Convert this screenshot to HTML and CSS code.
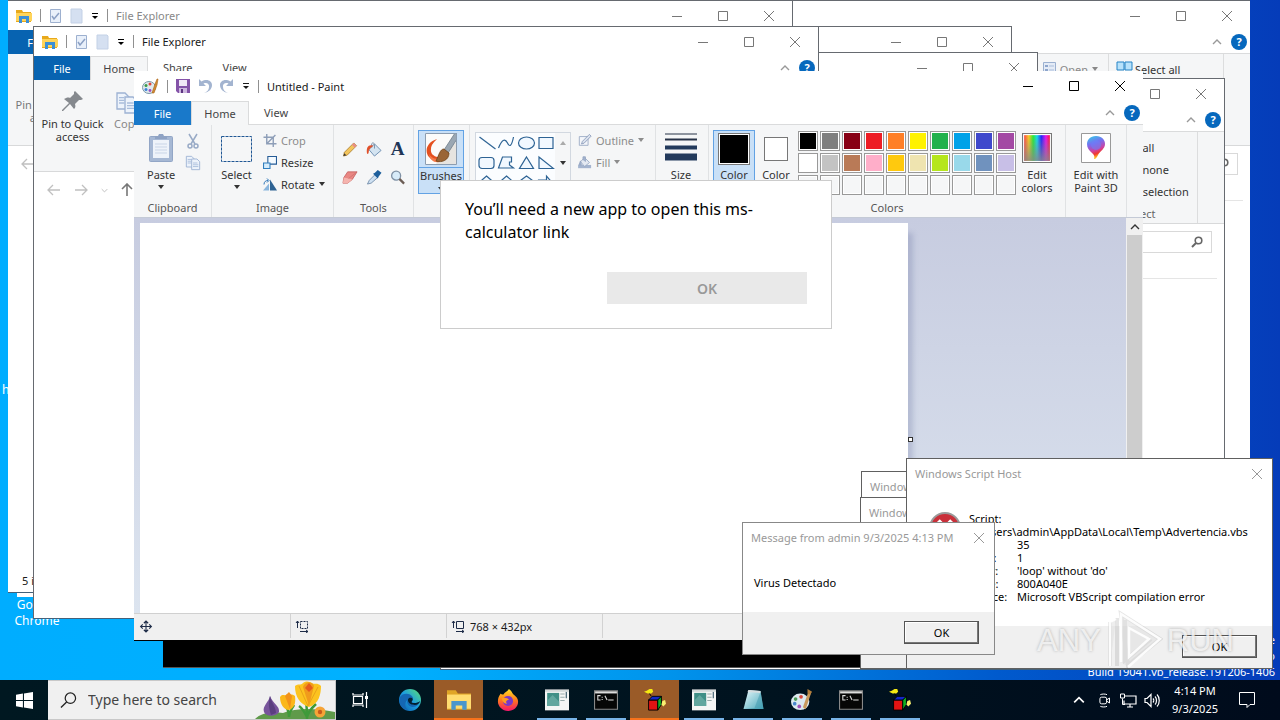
FILE: index.html
```html
<!DOCTYPE html>
<html lang="en">
<head>
<meta charset="utf-8">
<title>Desktop</title>
<link rel="stylesheet" href="styles.css">
</head>
<body>
<svg class="defs" aria-hidden="true">
  <defs>
    <linearGradient id="rainbow"><stop offset="0" stop-color="#f44"/><stop offset=".18" stop-color="#fc2"/><stop offset=".35" stop-color="#2e3"/><stop offset=".5" stop-color="#1de"/><stop offset=".67" stop-color="#22f"/><stop offset=".85" stop-color="#e1e"/><stop offset="1" stop-color="#f13"/></linearGradient>
    <linearGradient id="fade" x2="0" y2="1"><stop offset="0" stop-color="#888" stop-opacity="0"/><stop offset="1" stop-color="#888" stop-opacity=".85"/></linearGradient>
    <linearGradient id="pin3d" x1="0" y1="0" x2=".3" y2="1"><stop offset="0" stop-color="#2ad4e8"/><stop offset=".4" stop-color="#7a6cf0"/><stop offset=".7" stop-color="#d0409c"/><stop offset=".85" stop-color="#f03a30"/><stop offset="1" stop-color="#ffc020"/></linearGradient>
    <linearGradient id="edgeg" x1="0" y1="1" x2="1" y2="0"><stop offset="0" stop-color="#0c59a4"/><stop offset=".5" stop-color="#1b9de2"/><stop offset="1" stop-color="#5fe070"/></linearGradient>
    <linearGradient id="foxg" x2="0" y2="1"><stop offset="0" stop-color="#ffe226"/><stop offset=".5" stop-color="#ff7a1c"/><stop offset="1" stop-color="#f5156c"/></linearGradient>
    <linearGradient id="paper" x2="1" y2="1"><stop offset="0" stop-color="#e8f8fb"/><stop offset="1" stop-color="#4aa8bb"/></linearGradient>
  </defs>
  <symbol id="i-min" viewBox="0 0 12 12"><path d="M1 6.500h10" stroke="currentColor"/></symbol>
  <symbol id="i-max" viewBox="0 0 12 12"><path d="M1.500 1.500h9v9h-9z" fill="none" stroke="currentColor"/></symbol>
  <symbol id="i-close" viewBox="0 0 12 12"><path d="M1 1l10 10M11 1L1 11" stroke="currentColor"/></symbol>
  <symbol id="i-up" viewBox="0 0 10 6"><path d="M1 5l4-4 4 4" fill="none" stroke="currentColor" stroke-width="1.400"/></symbol>
  <symbol id="i-tri" viewBox="0 0 6 4"><path d="M0 0h6L3 4z" fill="currentColor"/></symbol>
  <symbol id="i-qat" viewBox="0 0 8 8"><path d="M1 1.500h6" stroke="currentColor"/><path d="M1 4h6L4 7z" fill="currentColor"/></symbol>
  <symbol id="i-folder" viewBox="0 0 16 16"><path d="M0 2h6l1 2h8v10H0z" fill="#e8a91c"/><path d="M0 5h16v8H0z" fill="#ffd45a"/><path d="M3 8h10v7h-3v-4H6v4H3z" fill="#3c8fd6"/></symbol>
  <symbol id="i-check" viewBox="0 0 13 16"><path d="M1.500 1.500h10v13h-10z" fill="#e9f0fa" stroke="#9db0cf"/><path d="M3 8l2 3 5-6" fill="none" stroke="#8ba0c4" stroke-width="1.500"/></symbol>
  <symbol id="i-new" viewBox="0 0 13 16"><path d="M1 1h10l1 1v13H1z" fill="#d5e0f1" stroke="#c3d1e6"/></symbol>
  <symbol id="i-pin" viewBox="0 0 24 24"><path d="M14 2l8 8-2 1-2 0-4 4c1 3 0 4-1 5l-4-5-7 7-1 0 0-1 7-7-5-4c2-1 4-2 6-1l4-4 0-2z" fill="#85898e"/></symbol>
  <symbol id="i-copy" viewBox="0 0 18 18"><g fill="#edf3fb" stroke="#9db2d3"><path d="M1.500 1.500h6l3 3v9h-9z"/><path d="M7.500 4.500h6l3 3v9h-9z"/></g><path d="M3 5h4M3 7h4M3 9h4M9 9h5M9 11h6M9 13h6" stroke="#a9bddb"/></symbol>
  <symbol id="i-back" viewBox="0 0 14 12"><path d="M13 6H1M6 1L1 6l5 5" fill="none" stroke="currentColor" stroke-width="1.300"/></symbol>
  <symbol id="i-fwd" viewBox="0 0 14 12"><path d="M1 6h12M8 1l5 5-5 5" fill="none" stroke="currentColor" stroke-width="1.300"/></symbol>
  <symbol id="i-upar" viewBox="0 0 12 14"><path d="M6 13V1M1 6l5-5 5 5" fill="none" stroke="currentColor" stroke-width="1.600"/></symbol>
  <symbol id="i-mag" viewBox="0 0 12 12"><circle cx="7.500" cy="4.500" r="3.300" fill="none" stroke="currentColor" stroke-width="1.600"/><path d="M5 7L1 11" stroke="currentColor" stroke-width="2"/></symbol>
  <symbol id="i-sel" viewBox="0 0 17 14"><path d="M1 1h7v8H1zM9 1h7v8H9z" fill="#b8e2fb" stroke="#2583c6"/></symbol>
  <symbol id="i-open" viewBox="0 0 13 14"><path d="M.5.500h12v13H.5z" fill="#e4ebf6" stroke="#9bb0d0"/><path d="M2 3h3v2H2zM2 7h3v2H2z" fill="#8ea6cc"/><path d="M6 4h5M6 8h5" stroke="#a9bddb"/></symbol>
  <symbol id="i-palette" viewBox="0 0 17 17"><ellipse cx="7" cy="9.500" rx="6.500" ry="6" fill="#dfe9ee" stroke="#7c98a8"/><circle cx="4" cy="7.500" r="1.500" fill="#3b9b4a"/><circle cx="8" cy="6" r="1.500" fill="#e1463a"/><circle cx="4" cy="11.500" r="1.500" fill="#3b86d8"/><circle cx="8" cy="12.500" r="1.400" fill="#9a4ec0"/><path d="M15 1l-2 5-3 9 2 0 3-8 1-6z" fill="#d08a32" stroke="#ad6718" stroke-width=".6"/></symbol>
  <symbol id="i-save" viewBox="0 0 14 14"><path d="M0 0h14v14H2l-2-2z" fill="#8453a8"/><path d="M3 1h8v6H3z" fill="#f0e7f6"/><path d="M3 9h8v5H3z" fill="#cdb6df"/><path d="M5 10h2v4H5z" fill="#5c3580"/></symbol>
  <symbol id="i-undo" viewBox="0 0 14 14"><path d="M1 0v7h7L5.500 4.500C9 3 11.500 5 11 8c0 3-2 5-5 6 5-1 8-4 8-8S9-1 3.500 2.500z" fill="#a3b4d0"/></symbol>
  <symbol id="i-cut" viewBox="0 0 12 16"><path d="M2 1l6 10M10 1L4 11" stroke="#98aac6" stroke-width="1.500"/><circle cx="3" cy="13" r="2" fill="none" stroke="#98aac6" stroke-width="1.500"/><circle cx="9" cy="13" r="2" fill="none" stroke="#98aac6" stroke-width="1.500"/></symbol>
  <symbol id="i-paste" viewBox="0 0 26 30"><rect x="1.500" y="3.500" width="23" height="25" rx="1" fill="#a6b8d4" stroke="#92a6c6"/><path d="M5 7h16v18H5z" fill="#eef3fa"/><path d="M7 11h12M7 14h12M7 17h12M7 20h12" stroke="#c9d5e7"/><path d="M7 3h3l1-2h4l1 2h3v3H7z" fill="#8fa3c4"/></symbol>
  <symbol id="i-select" viewBox="0 0 31 26"><path d="M.5.500h30v25H.5z" fill="none" stroke="#1f5794" stroke-dasharray="3 1"/></symbol>
  <symbol id="i-crop" viewBox="0 0 12 12"><path d="M3 0v9h9M0 3h9v9M3 9l8-8" fill="none" stroke="#8e9eb8" stroke-width="1.300"/></symbol>
  <symbol id="i-resize" viewBox="0 0 13 12"><path d="M4.500.500h8v7h-8z" fill="#f4faff" stroke="#255b96"/><path d="M.5 6.500h6v5h-6z" fill="#d5ecfb" stroke="#2f7dbd"/></symbol>
  <symbol id="i-rotate" viewBox="0 0 14 12"><path d="M6 12H0l6-7z" fill="#8ab6de"/><path d="M7 12V1l7 11z" fill="#2e6293"/><path d="M1 6c0-3 2-4 4-4M4 0l2 2-2 2" fill="none" stroke="#2b74b7"/></symbol>
  <symbol id="i-pencil" viewBox="0 0 16 16"><path d="M1 15l1-4L12 1l3 3L5 14z" fill="#f3c55c" stroke="#a3772c" stroke-width=".8"/><path d="M12 1l3 3-2 2-3-3z" fill="#e88d86"/><path d="M1 15l1-3 2 2z" fill="#333"/></symbol>
  <symbol id="i-bucket" viewBox="0 0 17 16"><path d="M9 2l7 7-7 6-6-7z" fill="#d4e4f1" stroke="#6c8db0"/><path d="M6 6V2c1-2 3-1 3 1v4" fill="none" stroke="#7890a8"/><path d="M8 4C3 2 0 5 1 12c1 2 2 0 2-3l2-3z" fill="#e0502a"/></symbol>
  <symbol id="i-eraser" viewBox="0 0 17 14"><path d="M6 1h10l-5 8-5 4H1l1-6z" fill="#e98783" stroke="#c25b5b" stroke-width=".8"/><path d="M2 7l5 1 4 1-5 4H1z" fill="#f5b4ae"/><path d="M7 8l9-7" stroke="#c76f6d" stroke-width=".7"/></symbol>
  <symbol id="i-pick" viewBox="0 0 16 16"><path d="M1 15l2-4 6-6 3 3-7 6z" fill="#cfe1f2" stroke="#5f7c9c" stroke-width=".8"/><path d="M7 4l2-1 3-3 4 3-3 4-1 2z" fill="#1e5f9c"/></symbol>
  <symbol id="i-zoom" viewBox="0 0 16 16"><circle cx="6" cy="6" r="4.800" fill="#d7ebf9" stroke="#7f91a5" stroke-width="1.400"/><path d="M9.500 9.500l5 5" stroke="#6b5d55" stroke-width="2.400"/></symbol>
  <symbol id="i-brush" viewBox="0 0 32 32"><path d="M0 0h32v32H0z" fill="#fbfbfa"/><path d="M32 8v24H10z" fill="#e6e4e0"/><path d="M12 6C2 9-1 18 4 24s11 4 13 0c-6 1-12-2-11-8 0-4 3-7 6-10z" fill="#e4501f"/><path d="M4 21c3 5 8 6 13 3l-3 5c-5 1-9-2-10-8z" fill="#f47a4a"/><path d="M30 0L19 17l4 3 9-14V0z" fill="#9aa7b3" stroke="#6f7d8a" stroke-width=".8"/><path d="M19 16c-4 0-5 6-8 12 6 2 13-1 13-8z" fill="#9a6536" stroke="#6f4218" stroke-width=".8"/><path d="M.5.500h31v31H.5z" fill="none" stroke="#8c9db0"/></symbol>
  <symbol id="i-outline" viewBox="0 0 16 14"><path d="M1.500 2.500h10v10h-10z" fill="#f4f6fa" stroke="#9aaac5"/><path d="M4 11l1-3 8-8 2 2-8 8z" fill="#dbe2ee" stroke="#8b9cba"/></symbol>
  <symbol id="i-fill" viewBox="0 0 17 16"><path d="M0 11h16v4H0z" fill="#a4b4cf"/><path d="M8 2l6 6-6 5-5-6z" fill="#e4e9f2" stroke="#93a4c1"/><path d="M6 5V1h3v6M3 6L1 11h3z" fill="#a4b4cf" stroke="#93a4c1"/></symbol>
  <symbol id="i-shapes" viewBox="0 0 78 60"><g fill="#f1f8ff" stroke="#2d6394" stroke-width="1.200"><path d="M3 4l16 12"/><path d="M22 15c4-10 7-9 9-5s4 4 6-6" fill="none"/><ellipse cx="50" cy="10" rx="8" ry="6"/><path d="M62.500 4.500h14v11h-14z"/><rect x="2.500" y="24.500" width="15" height="11" rx="3"/><path d="M22 35l4-11h9v5l-2 0 0 3 4 3z"/><path d="M50 24l7 11.500H43z"/><path d="M62.500 24v11.500H77z"/><path d="M10 43l8 7-8 7-8-7z"/><path d="M30 43l8 7-8 7-8-7z"/><path d="M50 43l8 6-3 8H45l-3-8z"/><path d="M62 47h8v-4l6 7-6 7v-4h-8z"/></g></symbol>
  <symbol id="i-size" viewBox="0 0 32 28"><path d="M0 1h32" stroke="#273247"/><path d="M0 6.500h32" stroke="#273247" stroke-width="2"/><path d="M0 14.500h32" stroke="#233a5c" stroke-width="4"/><path d="M0 24h32" stroke="#233a5c" stroke-width="7"/></symbol>
  <symbol id="i-edit" viewBox="0 0 28 28"><path d="M.5.500h27v27H.5z" fill="#fff" stroke="#777"/><path d="M2 2h24v24H2z" fill="url(#rainbow)"/><path d="M2 2h24v24H2z" fill="url(#fade)"/></symbol>
  <symbol id="i-p3d" viewBox="0 0 30 30"><path d="M.5.500h29v29H.5z" fill="#fff" stroke="#999"/><path d="M15 3c6 0 9 4 9 8 0 5-5 7-7 11-1 2-2 4-4 4 1-3 0-4-2-6-3-3-5-5-5-9 0-4 3-8 9-8z" fill="url(#pin3d)"/><circle cx="15" cy="12" r="5" fill="#6b80f7" opacity=".6"/></symbol>
  <symbol id="i-move" viewBox="0 0 12 12"><path d="M6 1v10M1 6h10M4 3l2-2 2 2M4 9l2 2 2-2M3 4L1 6l2 2M9 4l2 2-2 2" fill="none" stroke="#1d2b47"/></symbol>
  <symbol id="i-dim" viewBox="0 0 14 13"><path d="M2.500 1v7M1 3l1.500-2L4 3M5 11.500h8M11 10l2 1.500-2 1.500" fill="none" stroke="#1d2b47"/><path d="M5.500 1.500h7v7h-7z" fill="none" stroke="#1d2b47"/></symbol>
  <symbol id="i-dimsel" viewBox="0 0 14 13"><path d="M2.500 1v7M1 3l1.500-2L4 3M5 11.500h8M11 10l2 1.500-2 1.500" fill="none" stroke="#1d2b47"/><path d="M5.500 1.500h7v7h-7z" fill="none" stroke="#1d2b47" stroke-dasharray="2 1"/></symbol>
  <symbol id="i-error" viewBox="0 0 32 32"><circle cx="16" cy="16" r="15" fill="#c9303a" stroke="#9a9a9a" stroke-width="2"/><path d="M9 9l14 14M23 9L9 23" stroke="#fff" stroke-width="5"/></symbol>
  <symbol id="i-win" viewBox="0 0 16 16"><path d="M0 2.500l6.500-1v6H0zM7.500 1.300L16 0v7.500H7.500zM0 8.500h6.500v6L0 13.500zM7.500 8.500H16V16l-8.500-1.300z" fill="#fff"/></symbol>
  <symbol id="i-search" viewBox="0 0 18 18"><circle cx="11" cy="6.500" r="5.500" fill="none" stroke="#222" stroke-width="1.300"/><path d="M7 10.500l-6 6" stroke="#222" stroke-width="1.400"/></symbol>
  <symbol id="i-flowers" viewBox="0 0 80 38"><path d="M0 38c6-6 16-8 28-6 16-6 34-4 52-1v7z" fill="#5f9a4a"/><path d="M34 36c0-6-2-10-5-14M34 36c0-6 3-8 5-12M52 38c0-8 0-12-1-16M52 36c2-7 6-10 9-13M52 36c-3-6-5-9-8-11" stroke="#3f9a3a" stroke-width="2.500" fill="none"/><path d="M15 15c-1 6-8 10-6 16 2 5 12 5 15 0 1-6-6-8-9-16z" fill="#77549b"/><path d="M15 15c-2 8-1 12 1 19l5-2c0-6-4-9-6-17z" fill="#5b3f80"/><path d="M25 16c3-4 5 0 7-3 2 2 4-1 8 2 1 8-1 12-6 14-5 0-9-6-9-13z" fill="#fbb71a"/><path d="M30 15l4-4 3 4-2 13z" fill="#f29219"/><path d="M40 5c3-3 6 0 8-3 4-3 7-1 9 0 3 2 5-1 9 3 0 8-2 18-12 21-9-3-14-10-14-21z" fill="#fcc31f"/><path d="M48 6c2-6 9-6 11-1l-5 20z" fill="#f09b1c"/><path d="M50 7l4-5 4 5-4 4z" fill="#e65b1c"/><path d="M44 5l9 20 10-19" fill="none" stroke="#e9a31a"/><circle cx="65" cy="31" r="5.500" fill="#f6a437"/><circle cx="65" cy="31" r="2.200" fill="#c95b1a"/></symbol>
  <symbol id="i-task" viewBox="0 0 17 16"><path d="M1.500 4.500h9v7h-9zM1 1v2h10V1M1 15v-2h10v2M14.500 0v4M14.500 7v9" fill="none" stroke="#fff" stroke-width="1.200"/><path d="M13 4h3v3h-3z" fill="#fff"/></symbol>
  <symbol id="i-edge" viewBox="0 0 24 24"><circle cx="12" cy="12" r="12" fill="url(#edgeg)"/><path d="M1 9c3-5 11-5 14 0 1 3-1 4-2 5 3 2 7 2 10-1-1 3-3 5-5 6-6 2-10-2-9-7-3 3-3 8 1 11C3 22-1 16 1 9z" fill="#1567b4"/><path d="M10 11c1-2 4-2 5 0 0 2-2 3-1 4 3 1 7 0 9-2-1 4-5 5-8 4-3 0-6-3-5-6z" fill="#03202f"/></symbol>
  <symbol id="i-tfolder" viewBox="0 0 22 20"><path d="M0 1h8l2 3h12v15H0z" fill="#e0a526"/><path d="M0 5h22v13H0z" fill="#ffdc70"/><path d="M4 11h14v8h-4v-4H8v4H4z" fill="#4a96cc"/></symbol>
  <symbol id="i-fox" viewBox="0 0 24 24"><path d="M4 5c0 1 2 1 3 1 2-3 4-3 6-6 4 3 3 4 5 6 4 3 5 5 5 8 0 6-5 10-11 10S1 19 1 14c0-4 1-6 3-9z" fill="url(#foxg)"/><circle cx="12" cy="13" r="5.500" fill="#7b37c8"/><path d="M5 10c4-1 7 0 8 2-3 0-4 2-2 4-3 0-5-2-6-6z" fill="#ff9c22"/></symbol>
  <symbol id="i-doc" viewBox="0 0 22 19"><path d="M0 0h22v19H0z" fill="#f5f6f5"/><path d="M2 3h11v12H2z" fill="#3f8f86"/><path d="M2 10l5-5 6 6v4H2z" fill="#62a79f"/><path d="M14 4h4M14 7h4M14 10h4" stroke="#9aa"/><path d="M19.500 2v6" stroke="#356"/><path d="M0 0h22v2H0z" fill="#d5d9d9"/></symbol>
  <symbol id="i-cmd" viewBox="0 0 22 18"><path d="M.5.500h21v17H.5z" fill="#060606" stroke="#888"/><path d="M1 1h20v2H1z" fill="#ddd"/><path d="M6 5H3.500v4H6M7.500 6v1M7.500 8v1M10 5l2 4M13 9h5" fill="none" stroke="#ddd"/></symbol>
  <symbol id="i-cube" viewBox="0 0 24 24"><path d="M0 3l3-1 3-2h3l1 3-2 2H4z" fill="#f6ea12"/><path d="M6 5l2 3" stroke="#000"/><path d="M5 12h10v11H5z" fill="#e21313" stroke="#000"/><path d="M5 12l4-4h10l-4 4z" fill="#1228c8" stroke="#000"/><path d="M15 12l4-4v9l-4 6z" fill="#10b022" stroke="#000"/><path d="M20 13l3-1 1 4-3 3-2-2z" fill="#f8f070"/></symbol>
  <symbol id="i-note" viewBox="0 0 23 22"><path d="M7 1l12 1 3 18H2z" fill="url(#paper)"/><path d="M7 1l12 1 0 2-13-1z" fill="#d6dde0"/><path d="M2 20l11-1 6-16 3 17z" fill="#3d98ad" opacity=".5"/></symbol>
  <symbol id="i-tpaint" viewBox="0 0 24 24"><ellipse cx="10" cy="14" rx="10" ry="9" fill="#dce9ef"/><circle cx="5" cy="11" r="2" fill="#4b9a55"/><circle cx="11" cy="8.500" r="2" fill="#d9483b"/><circle cx="4" cy="16" r="2" fill="#4a86cc"/><circle cx="9" cy="19" r="2" fill="#a14fb8"/><path d="M19 3l-6 17 3 2 6-18z" fill="#c99a5c"/><path d="M18 0l5 3-2 3-3-1z" fill="#b5803e"/></symbol>
  <symbol id="i-cam" viewBox="0 0 14 18"><rect x="1.500" y="5" width="8" height="8" rx="2" fill="none" stroke="#fff" stroke-width="1.200"/><path d="M10 8l3-2v6l-3-2M2 2c2-1 6-1 8 0M2 16c2 1 6 1 8 0" fill="none" stroke="#fff" stroke-width="1.200"/></symbol>
  <symbol id="i-net" viewBox="0 0 17 14"><path d="M5 2.500h11v8H4V7M7 13.500h6M10 11v2" fill="none" stroke="#fff" stroke-width="1.200"/><path d="M.5.500h4v4h-4zM2.500 5v6H5" fill="none" stroke="#fff"/></symbol>
  <symbol id="i-vol" viewBox="0 0 17 14"><path d="M1 5h2l4-4v12L3 9H1zM9 5c1 1 1 3 0 4M11 3c2 2 2 6 0 8M13 1c3 3 3 9 0 12" fill="none" stroke="#fff" stroke-width="1.200"/></symbol>
  <symbol id="i-action" viewBox="0 0 16 16"><path d="M.5.500h15v12H11l-3 3v-3H.5z" fill="none" stroke="#fff"/></symbol>
</svg>

<div class="desktop">
  <main class="workspace">
    <p class="shortcut-cut">h</p>
    <div class="shortcut"><span class="chrome-ball"></span>Google<br>Chrome</div>
    <p class="build">Test Mode<br>Windows 10 Pro<br>Build 19041.vb_release.191206-1406</p>

    <section class="window explorer inactive win-a">
      <header class="titlebar"><div class="controls"><button aria-label="Minimize"><svg><use href="#i-min"/></svg></button><button aria-label="Maximize"><svg><use href="#i-max"/></svg></button><button aria-label="Close"><svg><use href="#i-close"/></svg></button></div></header>
      <div class="tabs"><span class="tabs-end"><svg class="chev"><use href="#i-up"/></svg><button class="help" aria-label="Help">?</button></span></div>
      <div class="ex-ribbon end">
        <div class="ex-open"><svg><use href="#i-open"/></svg>Open<svg class="tri"><use href="#i-tri"/></svg></div>
        <div class="ex-select"><span><svg><use href="#i-sel"/></svg>Select all</span></div>
      </div>
      <div class="ex-nav"><div class="ex-search"><svg><use href="#i-mag"/></svg></div></div>
      <hr>
    </section>

    <section class="window explorer inactive win-b">
      <header class="titlebar"><div class="controls"><button aria-label="Minimize"><svg><use href="#i-min"/></svg></button><button aria-label="Maximize"><svg><use href="#i-max"/></svg></button><button aria-label="Close"><svg><use href="#i-close"/></svg></button></div></header>
      <div class="tabs"><span class="tabs-end"><svg class="chev"><use href="#i-up"/></svg><button class="help" aria-label="Help">?</button></span></div>
      <div class="ex-ribbon end">
        <div class="ex-select"><span>Select all</span><span>Select none</span><span>Invert selection</span><b>Select</b></div>
      </div>
      <div class="ex-nav"><div class="ex-search"><svg><use href="#i-mag"/></svg></div></div>
      <hr>
    </section>

    <section class="window explorer inactive win-c"><header class="titlebar"><div class="controls"><button aria-label="Minimize"><svg><use href="#i-min"/></svg></button><button aria-label="Maximize"><svg><use href="#i-max"/></svg></button><button aria-label="Close"><svg><use href="#i-close"/></svg></button></div></header></section>
    <section class="window explorer inactive win-d"><header class="titlebar"><div class="controls"><button aria-label="Minimize"><svg><use href="#i-min"/></svg></button><button aria-label="Maximize"><svg><use href="#i-max"/></svg></button><button aria-label="Close"><svg><use href="#i-close"/></svg></button></div></header></section>

    <section class="window explorer inactive win-e">
      <header class="titlebar">
        <div class="quick"><svg class="s16"><use href="#i-folder"/></svg><i></i><svg class="doc"><use href="#i-check"/></svg><svg class="doc"><use href="#i-new"/></svg><svg class="s8"><use href="#i-qat"/></svg><i></i></div>
        <h2>File Explorer</h2>
        <div class="controls"><button aria-label="Minimize"><svg><use href="#i-min"/></svg></button><button aria-label="Maximize"><svg><use href="#i-max"/></svg></button><button aria-label="Close"><svg><use href="#i-close"/></svg></button></div>
      </header>
      <div class="tabs"><button class="file">File</button></div>
      <div class="ex-ribbon"><div class="ex-tool"><svg><use href="#i-pin"/></svg>Pin to Quick access</div></div>
      <div class="ex-nav"><svg class="nav-w"><use href="#i-back"/></svg></div>
      <footer class="ex-status">5 items</footer>
    </section>

    <section class="window explorer win-f">
      <header class="titlebar">
        <div class="quick"><svg class="s16"><use href="#i-folder"/></svg><i></i><svg class="doc"><use href="#i-check"/></svg><svg class="doc"><use href="#i-new"/></svg><svg class="s8"><use href="#i-qat"/></svg><i></i></div>
        <h2>File Explorer</h2>
        <div class="controls"><button aria-label="Minimize"><svg><use href="#i-min"/></svg></button><button aria-label="Maximize"><svg><use href="#i-max"/></svg></button><button aria-label="Close"><svg><use href="#i-close"/></svg></button></div>
      </header>
      <div class="tabs"><button class="file">File</button><button class="on">Home</button><button>Share</button><button>View</button><span class="tabs-end"><svg class="chev"><use href="#i-up"/></svg><button class="help" aria-label="Help">?</button></span></div>
      <div class="ex-ribbon"><div class="ex-tool"><svg><use href="#i-pin"/></svg>Pin to Quick access</div><div class="ex-tool dim"><svg class="big"><use href="#i-copy"/></svg>Copy</div></div>
      <div class="ex-nav"><svg class="nav-w"><use href="#i-back"/></svg><svg class="nav-w"><use href="#i-fwd"/></svg><svg class="nav-d"><use href="#i-up"/></svg><svg class="nav-u"><use href="#i-upar"/></svg></div>
    </section>

    <section class="window console"></section>

    <section class="window paint">
      <header class="titlebar">
        <div class="quick"><svg class="s17"><use href="#i-palette"/></svg><i></i><svg class="s14"><use href="#i-save"/></svg><svg class="s14"><use href="#i-undo"/></svg><svg class="s14 flip"><use href="#i-undo"/></svg><svg class="s8"><use href="#i-qat"/></svg><i></i></div>
        <h1>Untitled - Paint</h1>
        <div class="controls"><button aria-label="Minimize"><svg><use href="#i-min"/></svg></button><button aria-label="Maximize"><svg><use href="#i-max"/></svg></button><button aria-label="Close"><svg><use href="#i-close"/></svg></button></div>
      </header>
      <div class="tabs"><button class="file">File</button><button class="on">Home</button><button>View</button><span class="tabs-end"><svg class="chev"><use href="#i-up"/></svg><button class="help" aria-label="Help">?</button></span></div>
      <div class="ribbon">
        <div class="group g-clip">
          <div class="tools"><button class="big"><svg class="paste"><use href="#i-paste"/></svg>Paste<svg class="tri"><use href="#i-tri"/></svg></button>
          <div class="stack"><button aria-label="Cut"><svg class="cut"><use href="#i-cut"/></svg></button><button aria-label="Copy"><svg class="s16"><use href="#i-copy"/></svg></button></div></div>
          <span class="label">Clipboard</span>
        </div>
        <div class="group g-image">
          <div class="tools"><button class="big"><svg class="select"><use href="#i-select"/></svg>Select<svg class="tri"><use href="#i-tri"/></svg></button>
          <div class="stack text"><button class="dim"><svg><use href="#i-crop"/></svg>Crop</button><button><svg><use href="#i-resize"/></svg>Resize</button><button><svg><use href="#i-rotate"/></svg>Rotate<svg class="tri"><use href="#i-tri"/></svg></button></div></div>
          <span class="label">Image</span>
        </div>
        <div class="group g-tools">
          <div class="toolgrid"><button aria-label="Pencil"><svg><use href="#i-pencil"/></svg></button><button aria-label="Fill with color"><svg><use href="#i-bucket"/></svg></button><button class="glyph">A</button><button aria-label="Eraser"><svg><use href="#i-eraser"/></svg></button><button aria-label="Color picker"><svg><use href="#i-pick"/></svg></button><button aria-label="Magnifier"><svg><use href="#i-zoom"/></svg></button></div>
          <span class="label">Tools</span>
        </div>
        <div class="group g-brush"><button class="brushes"><span><svg><use href="#i-brush"/></svg></span>Brushes<svg class="tri"><use href="#i-tri"/></svg></button></div>
        <div class="group g-shapes">
          <div class="tools">
            <div class="gallery"><svg><use href="#i-shapes"/></svg><div class="scroller"><svg class="tri up"><use href="#i-tri"/></svg><svg class="tri"><use href="#i-tri"/></svg><svg class="s8"><use href="#i-qat"/></svg></div></div>
            <div class="stack text"><button class="dim"><svg><use href="#i-outline"/></svg>Outline<svg class="tri"><use href="#i-tri"/></svg></button><button class="dim"><svg><use href="#i-fill"/></svg>Fill<svg class="tri"><use href="#i-tri"/></svg></button></div>
          </div>
        </div>
        <div class="group g-size"><button class="big"><svg class="size"><use href="#i-size"/></svg>Size</button></div>
        <div class="group g-colors">
          <div class="tools">
            <button class="color one"><span></span>Color</button><button class="color two"><span></span>Color</button>
            <div class="palette">
              <button aria-label="Black" class="c1"></button><button aria-label="Gray" class="c2"></button><button aria-label="Dark red" class="c3"></button><button aria-label="Red" class="c4"></button><button aria-label="Orange" class="c5"></button><button aria-label="Yellow" class="c6"></button><button aria-label="Green" class="c7"></button><button aria-label="Turquoise" class="c8"></button><button aria-label="Indigo" class="c9"></button><button aria-label="Purple" class="c10"></button>
              <button aria-label="White" class="c11"></button><button aria-label="Light gray" class="c12"></button><button aria-label="Brown" class="c13"></button><button aria-label="Rose" class="c14"></button><button aria-label="Gold" class="c15"></button><button aria-label="Light yellow" class="c16"></button><button aria-label="Lime" class="c17"></button><button aria-label="Light turquoise" class="c18"></button><button aria-label="Blue gray" class="c19"></button><button aria-label="Lavender" class="c20"></button>
              <button aria-label="Custom 1"></button><button aria-label="Custom 2"></button><button aria-label="Custom 3"></button><button aria-label="Custom 4"></button><button aria-label="Custom 5"></button><button aria-label="Custom 6"></button><button aria-label="Custom 7"></button><button aria-label="Custom 8"></button><button aria-label="Custom 9"></button><button aria-label="Custom 10"></button>
            </div>
            <button class="big edit"><svg><use href="#i-edit"/></svg>Edit<br>colors</button>
          </div>
          <span class="label">Colors</span>
        </div>
        <div class="group g-3d"><button class="big"><svg><use href="#i-p3d"/></svg>Edit with<br>Paint 3D</button></div>
      </div>
      <div class="canvas-area">
        <div class="canvas-wrap"><div class="canvas"></div><span class="handle"></span></div>
        <div class="scrollbar"><svg><use href="#i-up"/></svg><span></span></div>
      </div>
      <footer class="status"><span><svg><use href="#i-move"/></svg></span><span><svg><use href="#i-dimsel"/></svg></span><span><svg><use href="#i-dim"/></svg>768 × 432px</span><span></span></footer>
    </section>

    <section class="window dialog host-a"><header><h2>Windows Script Host</h2></header></section>
    <section class="window dialog host-b"><header><h2>Windows Script Host</h2></header></section>
    <section class="window dialog host">
      <header><h2>Windows Script Host</h2><button aria-label="Close"><svg><use href="#i-close"/></svg></button></header>
      <div class="body"><svg class="error"><use href="#i-error"/></svg>
        <dl><dt class="wide">Script:</dt><dd class="wide">C:\Users\admin\AppData\Local\Temp\Advertencia.vbs</dd><dt>Line:</dt><dd>35</dd><dt>Char:</dt><dd>1</dd><dt>Error:</dt><dd>'loop' without 'do'</dd><dt>Code:</dt><dd>800A040E</dd><dt>Source:</dt><dd>Microsoft VBScript compilation error</dd></dl>
      </div>
      <footer><button>OK</button></footer>
    </section>
    <section class="window dialog message">
      <header><h2>Message from admin 9/3/2025 4:13 PM</h2><button aria-label="Close"><svg><use href="#i-close"/></svg></button></header>
      <div class="body">Virus Detectado</div>
      <footer><button>OK</button></footer>
    </section>
    <section class="window applink"><p>You’ll need a new app to open this ms-calculator link</p><button disabled>OK</button></section>
    <div class="watermark"><span>ANY</span><svg viewBox="0 0 58 62"><path d="M5 56V12M12 56V8M16 4l39 25-32 26zM20 10v40l26-21" fill="none" stroke="#999" stroke-opacity=".25" stroke-width="4"/><path d="M5 56V12l6-3M16 52V4l39 25-32 28M24 47V18l20 11z" fill="#ddd" fill-opacity=".5" stroke="#fff" stroke-opacity=".9" stroke-width="2.500"/></svg><span>RUN</span></div>
  </main>

  <nav class="taskbar">
    <button class="start" aria-label="Start"><svg><use href="#i-win"/></svg></button>
    <label class="find"><svg class="s17"><use href="#i-search"/></svg><input type="text" placeholder="Type here to search" aria-label="Search"><svg class="flowers"><use href="#i-flowers"/></svg></label>
    <button class="app" aria-label="Task View"><svg class="s17"><use href="#i-task"/></svg></button>
    <button class="app" aria-label="Edge"><svg><use href="#i-edge"/></svg></button>
    <button class="app alert" aria-label="File Explorer"><svg><use href="#i-tfolder"/></svg></button>
    <button class="app" aria-label="Firefox"><svg><use href="#i-fox"/></svg></button>
    <button class="app run" aria-label="Script"><svg><use href="#i-doc"/></svg></button>
    <button class="app run" aria-label="Command Prompt"><svg><use href="#i-cmd"/></svg></button>
    <button class="app alert" aria-label="Program"><svg><use href="#i-cube"/></svg></button>
    <button class="app run" aria-label="Script"><svg><use href="#i-doc"/></svg></button>
    <button class="app run" aria-label="Notepad"><svg><use href="#i-note"/></svg></button>
    <button class="app run" aria-label="Paint"><svg><use href="#i-tpaint"/></svg></button>
    <button class="app run" aria-label="Command Prompt"><svg><use href="#i-cmd"/></svg></button>
    <button class="app run" aria-label="Program"><svg><use href="#i-cube"/></svg></button>
    <div class="tray"><svg class="t-up"><use href="#i-up"/></svg><svg><use href="#i-cam"/></svg><svg><use href="#i-net"/></svg><svg><use href="#i-vol"/></svg><time>4:14 PM<br>9/3/2025</time><svg class="act"><use href="#i-action"/></svg></div>
  </nav>
</div>
</body>
</html>
```
FILE: styles.css
```css
* { box-sizing: border-box; margin: 0; padding: 0; }
html, body { height: 100%; }
body { font: 11px/13px "Noto Sans", "Open Sans", sans-serif; color: #1a1a1a; overflow: hidden; }
button, input { font: inherit; color: inherit; background: none; border: 0; border-radius: 0; }
h1, h2 { font-size: 11px; font-weight: 400; white-space: nowrap; }
svg { display: block; flex: none; }
.defs { position: absolute; width: 0; height: 0; }

.desktop { height: 100vh; display: flex; flex-direction: column; background: linear-gradient(90deg, #00adff 0%, #00b1ff 30%, #0094ec 52%, #005acd 78%, #053cb9 100%); }
.workspace { flex: 1; position: relative; overflow: hidden; }
.shortcut, .shortcut-cut, .build { position: absolute; color: #fff; font-size: 12px; line-height: 16px; }
.shortcut { left: 4px; top: 581px; width: 66px; text-align: center; }
.chrome-ball { display: block; width: 40px; height: 16px; margin: 0 auto; background: linear-gradient(90deg, #fff 40%, #18a05a 40%); }
.shortcut-cut { left: 2px; top: 382px; }
.build { right: 5px; bottom: 0; text-align: right; font-size: 11px; }

.window { position: absolute; background: #fff; display: flex; flex-direction: column; overflow: hidden; }
.explorer { border: 1px solid #666a70; border-bottom-color: #44617a; }
.win-a { left: 500px; right: 30px; top: 0; height: 592px; border-right: 0; }
.win-b { left: 440px; right: 55px; top: 78px; height: 592px; }
.win-c { left: 227px; width: 785px; top: 26px; height: 592px; }
.win-d { left: 253px; width: 785px; top: 52px; height: 592px; }
.win-e { left: 8px; width: 785px; top: 0; height: 593px; border-left: 0; }
.win-f { left: 33px; width: 786px; top: 26px; height: 593px; }
.console { left: 163px; width: 760px; top: 620px; height: 48px; background: #000; border-bottom: 1px solid #555; }

.titlebar { display: flex; align-items: center; height: 29px; flex: none; }
.inactive .titlebar { color: #888; }
.quick { display: flex; align-items: center; gap: 8px; padding: 0 8px; }
.quick i { width: 1px; height: 13px; background: #909090; }
.explorer .quick svg { color: #000; }
.s8 { width: 8px; height: 8px; }
.s14 { width: 14px; height: 14px; }
.s16 { width: 16px; height: 16px; }
.s17 { width: 17px; height: 17px; }
.doc { width: 13px; height: 16px; }
.flip { transform: scaleX(-1); }
.controls { display: flex; margin-left: auto; color: #777; }
.controls button { width: 46px; height: 28px; display: grid; place-items: center; }
.controls svg { width: 12px; height: 12px; }
.tabs { display: flex; align-items: stretch; height: 24px; flex: none; border-bottom: 1px solid #dadbdc; color: #444; }
.tabs > button { padding: 0 15px; }
.tabs > .file { width: 56px; padding: 0; background: #0763b1; color: #fff; height: 24px; }
.tabs > .on { background: #f5f6f7; border: 1px solid #dadbdc; border-bottom: 0; height: 24px; width: 58px; padding: 0; }
.tabs-end { display: flex; align-items: center; gap: 9px; margin-left: auto; padding-right: 3px; }
.chev { width: 10px; height: 6px; color: #999; }
.help { width: 16px; height: 16px; border-radius: 8px; background: #0668bd; color: #fff; font-weight: 700; line-height: 16px; }

.ex-ribbon { display: flex; height: 92px; flex: none; background: #f5f6f7; border-bottom: 1px solid #d8d9da; color: #333; }
.ex-ribbon.end { justify-content: flex-end; padding-right: 26px; }
.ex-tool { width: 77px; text-align: center; padding: 9px 6px; }
.ex-tool svg { width: 24px; height: 24px; margin: 0 auto 4px; }
.ex-tool.dim { width: 32px; color: #888; padding: 9px 0; }
.ex-tool .big { width: 24px; height: 28px; margin: 0 auto; }
.win-e .ex-tool { color: #777; }
.win-e .ex-tool { padding-top: 16px; }
.ex-open { display: flex; align-items: center; gap: 4px; height: 18px; margin: 6px 0 0; padding-right: 10px; color: #888; }
.ex-open > svg { width: 13px; height: 14px; }
.tri, .ex-open > .tri { width: 6px; height: 4px; }
.ex-select { display: flex; flex-direction: column; width: 116px; border-left: 1px solid #dcddde; border-right: 1px solid #dcddde; padding: 5px 0 0 26px; }
.ex-select span { display: flex; height: 22px; line-height: 22px; }
.ex-select span svg { width: 17px; height: 14px; margin: 2px 2px 0 -19px; }
.ex-select b { font-weight: 400; line-height: 22px; color: #666; padding-left: 16px; }
.ex-nav { display: flex; align-items: center; height: 36px; flex: none; padding: 0 13px; gap: 14px; color: #c0c0c0; }
.nav-w { width: 14px; height: 12px; }
.nav-d { width: 7px; height: 5px; transform: scaleY(-1); }
.nav-u { width: 12px; height: 14px; color: #777; }
.win-f .ex-nav { gap: 13px; }
.ex-search { width: 160px; height: 22px; border: 1px solid #d9d9d9; margin-left: auto; display: flex; align-items: center; justify-content: flex-end; padding-right: 8px; color: #666; }
.ex-search svg { width: 12px; height: 12px; }
.win-a .ex-nav, .win-b .ex-nav { padding-right: 12px; }
.explorer hr { border: 0; border-top: 1px solid #e5e5e5; margin: 18px 7px 0; }
.ex-status { margin-top: auto; padding: 0 14px 5px; }

.paint { left: 134px; width: 1009px; top: 71px; height: 570px; border-bottom: 1px solid #000; }
.paint .titlebar { height: 30px; }
.paint .controls { color: #000; }
.paint .tabs > .file { width: 57px; background: #1979ca; }
.ribbon { display: flex; height: 92px; flex: none; background: #f5f6f7; color: #333; }
.group { display: flex; flex-direction: column; align-items: center; border-right: 1px solid #e0e2e4; padding: 5px 0 3px; }
.tools { display: flex; align-self: stretch; }
.label { margin-top: auto; color: #555; }
.big { display: flex; flex-direction: column; align-items: center; }
.big svg { width: 30px; height: 30px; margin: 3px 0 5px; }
.big .paste { width: 26px; height: 30px; }
.big .select { width: 31px; height: 26px; margin: 6px 0 6px; }
.big .size { width: 32px; height: 28px; margin: 3px 0 7px; }
.big .tri { width: 6px; height: 4px; margin: 4px 0 0; }
.stack { display: flex; flex-direction: column; }
.stack button { height: 22px; display: flex; align-items: center; gap: 4px; }
.stack .cut { width: 12px; height: 16px; margin-left: 2px; }
.stack.text svg { width: 14px; height: 13px; }
.stack.text .tri { width: 6px; height: 4px; }
.dim { color: #8c8c8c; }
.g-clip { width: 78px; }
.g-clip .tools { padding-left: 13px; gap: 10px; }
.g-image { width: 122px; }
.g-image .tools { padding-left: 9px; gap: 11px; }
.g-image .stack, .g-shapes .stack { margin-top: -1px; }
.g-tools { width: 80px; }
.toolgrid { display: grid; grid-template-columns: repeat(3, 24px); grid-auto-rows: 28px; padding-top: 5px; }
.toolgrid button { display: grid; place-items: center; }
.toolgrid svg { width: 16px; height: 15px; }
.toolgrid .glyph { font: 700 19px/20px "Liberation Serif", serif; color: #1f3657; }
.g-brush { width: 56px; padding-left: 4px; align-items: flex-start; }
.brushes { width: 46px; height: 64px; background: #c9e0f7; border: 1px solid #62a2e4; display: flex; flex-direction: column; align-items: center; gap: 1px; }
.brushes span { width: 44px; border-bottom: 1px solid #62a2e4; padding: 2px 6px; }
.brushes span svg { width: 32px; height: 32px; }
.brushes .tri { margin-top: 4px; }
.g-shapes { width: 186px; }
.g-shapes .tools { padding-left: 5px; gap: 7px; }
.gallery { display: flex; border: 1px solid #d2d8e0; background: #fbfdff; height: 62px; margin-top: 2px; }
.gallery > svg { width: 79px; height: 60px; }
.scroller { width: 15px; display: flex; flex-direction: column; align-items: center; gap: 16px; padding-top: 8px; background: #f5f6f7; }
.up { transform: scaleY(-1); color: #aaa; }
.g-size { width: 53px; padding-right: 2px; }
.g-colors { width: 357px; }
.g-colors .tools { padding-left: 4px; }
.color { width: 42px; height: 66px; display: flex; flex-direction: column; align-items: center; }
.color span { border: 1px solid #777; background: #fff; }
.one { background: #c9e0f7; border: 1px solid #62a2e4; padding-top: 2px; }
.one span { width: 32px; height: 32px; background: #000; box-shadow: inset 0 0 0 1px #fff; margin-bottom: 3px; }
.two { padding-top: 7px; }
.two span { width: 24px; height: 24px; margin-bottom: 7px; }
.palette { display: grid; grid-template-columns: repeat(10, 20px); grid-auto-rows: 20px; gap: 2px; padding: 1px 2px 0 1px; }
.palette button { border: 1px solid #999; box-shadow: inset 0 0 0 1px #fff; }
.c1 { background: #000; } .c2 { background: #7f7f7f; } .c3 { background: #880015; } .c4 { background: #ed1c24; } .c5 { background: #ff7f27; }
.c6 { background: #fff200; } .c7 { background: #22b14c; } .c8 { background: #00a2e8; } .c9 { background: #3f48cc; } .c10 { background: #a349a4; }
.c11 { background: #fff; } .c12 { background: #c3c3c3; } .c13 { background: #b97a57; } .c14 { background: #ffaec9; } .c15 { background: #ffc90e; }
.c16 { background: #efe4b0; } .c17 { background: #b5e61d; } .c18 { background: #99d9ea; } .c19 { background: #7092be; } .c20 { background: #c8bfe7; }
.edit { width: 38px; }
.g-3d { width: 61px; }
.canvas-area { flex: 1; display: flex; min-height: 0; background: linear-gradient(#c7cce0, #dce4ef); border-top: 1px solid #c4cad6; }
.canvas-wrap { flex: 1; position: relative; padding: 5px 0 0 6px; overflow: hidden; }
.canvas { width: 768px; height: 432px; background: #fff; box-shadow: 5px 10px 5px rgba(90, 105, 150, .25); }
.handle { position: absolute; left: 774px; top: 219px; width: 5px; height: 5px; border: 1px solid #333; background: #fff; }
.scrollbar { width: 17px; background: #f0f0f0; display: flex; flex-direction: column; align-items: center; padding: 6px 1px 0; }
.scrollbar svg { width: 10px; height: 6px; margin-bottom: 5px; color: #333; }
.scrollbar span { flex: 1; width: 15px; background: #cdcdcd; }
.status { height: 27px; flex: none; display: flex; background: #f0f0f0; border-top: 1px solid #d0d0d0; padding: 0 0 2px 1px; }
.status span { width: 156px; display: flex; align-items: center; gap: 5px; padding-left: 4px; border-right: 1px solid #d2d2d2; }
.status svg { width: 14px; height: 13px; }

.dialog { border: 1px solid #606060; }
.dialog header { display: flex; align-items: center; justify-content: space-between; height: 29px; flex: none; padding: 0 8px; color: #999; }
.dialog header svg { width: 12px; height: 12px; margin-right: 1px; }
.dialog .body { flex: 1; color: #000; }
.dialog footer { background: #f0f0f0; display: flex; justify-content: flex-end; align-items: center; height: 42px; flex: none; padding: 0 15px 2px 0; }
.dialog footer button { width: 75px; height: 23px; border: 1px solid #555; box-shadow: inset -1px -1px 0 #777, inset 1px 1px 0 #fff; color: #000; }
.host-a { left: 861px; width: 367px; top: 471px; height: 197px; }
.host-b { left: 860px; width: 367px; top: 497px; height: 172px; background: linear-gradient(#fff 130px, #f0f0f0 130px); }
.host { left: 906px; width: 367px; top: 458px; height: 211px; }
.host .body { display: flex; padding: 24px 0 0 22px; gap: 8px; }
.error { width: 32px; height: 32px; }
.host dl { display: grid; grid-template-columns: 48px 1fr; grid-auto-rows: 13px; align-content: start; white-space: nowrap; }
.host .wide { grid-column: 1 / -1; }
.message { left: 742px; width: 253px; top: 522px; height: 133px; border-color: #888; }
.message .body { padding: 24px 11px 10px; }
.applink { left: 440px; width: 392px; top: 180px; height: 149px; border: 1px solid #ccc; padding: 17px 24px 24px; }
.applink p { font-size: 16px; line-height: 23px; color: #000; width: 310px; }
.applink button { margin-top: auto; align-self: flex-end; width: 200px; height: 32px; background: #e9e9e9; color: #999; font-size: 14px; font-weight: 600; }
.watermark { position: absolute; right: 46px; bottom: 8px; display: flex; align-items: center; gap: 4px; pointer-events: none; }
.watermark span { font: 400 31px/40px "Liberation Sans", sans-serif; color: rgba(250, 250, 250, .8); text-shadow: 0 0 3px rgba(80, 80, 80, .4); }
.watermark svg { width: 58px; height: 62px; }

.taskbar { display: flex; height: 40px; flex: none; background: linear-gradient(90deg, #001821, #00131f 60%, #000b1c); color: #fff; }
.start { width: 48px; display: grid; place-items: center; }
.start svg { width: 17px; height: 17px; }
.find { width: 288px; display: flex; align-items: center; background: #f0f0f0; padding-left: 12px; border: 1px solid #c8c8c8; border-left: 0; }
.find input { flex: 1; min-width: 0; padding-left: 11px; font-size: 14px; line-height: 20px; outline: 0; }
.find input::placeholder { color: #444; opacity: 1; }
.find .flowers { width: 80px; height: 38px; }
.app { width: 49px; display: grid; place-items: center; border-bottom: 2px solid transparent; border-top: 2px solid transparent; }
.app svg { width: 24px; height: 22px; }
.app .s17 { width: 17px; height: 16px; }
.app.run { background: linear-gradient(#78b4e8, #78b4e8) center bottom / 40px 2px no-repeat border-box; }
.app.alert { background: #9a5b28; border-bottom-color: #f7721b; border-top-color: #9a5b28; }
.tray { margin-left: auto; display: flex; align-items: center; gap: 7px; padding-right: 25px; }
.tray svg { width: 17px; height: 15px; }
.tray .t-up { width: 12px; height: 8px; margin-right: 4px; }
.tray .act { width: 16px; height: 16px; margin-left: 14px; }
.tray time { text-align: center; line-height: 18px; padding-left: 4px; }
```
